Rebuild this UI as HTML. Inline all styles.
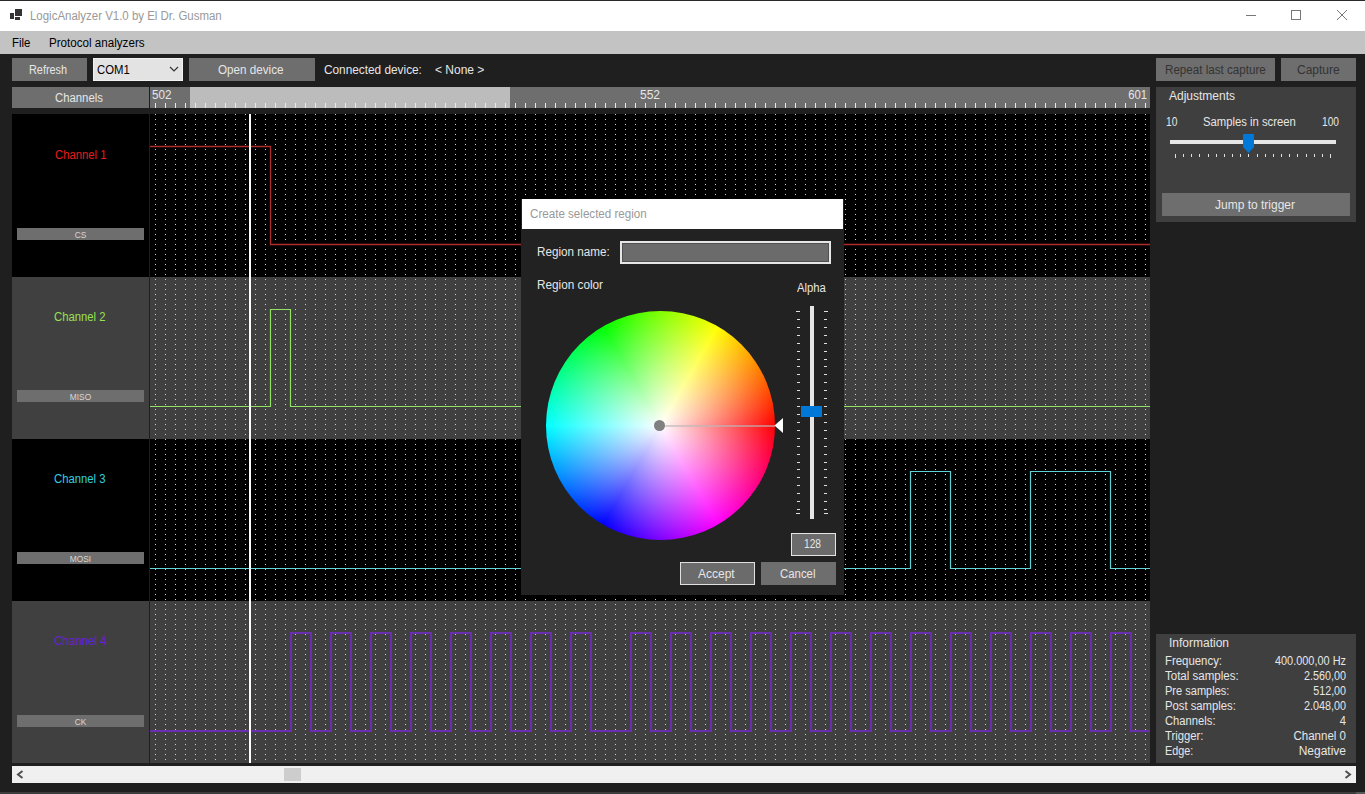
<!DOCTYPE html>
<html><head><meta charset="utf-8">
<style>
*{margin:0;padding:0;box-sizing:border-box}
html,body{width:1365px;height:794px;overflow:hidden;background:#1f1f1f;font-family:"Liberation Sans",sans-serif;font-size:12px;line-height:14px;color:#e6e6e6}
.a{position:absolute}
.t{position:absolute;white-space:nowrap;line-height:14px}
.btn{position:absolute;background:#6e6e6e}
</style></head><body>
<!-- window top border -->
<div class="a" style="left:0;top:0;width:1365px;height:1px;background:#2a2a2a"></div>
<!-- title bar -->
<div class="a" style="left:0;top:1px;width:1365px;height:30px;background:#ffffff"></div>
<div class="a" style="left:10px;top:13px;width:4px;height:6px;background:#333"></div>
<div class="a" style="left:15px;top:9px;width:7px;height:7px;background:#333"></div>
<div class="a" style="left:15px;top:17px;width:5px;height:3px;background:#333"></div>
<div class="t" style="transform:scaleX(0.955);transform-origin:0 0;left:30px;top:9px;color:#999">LogicAnalyzer V1.0 by El Dr. Gusman</div>
<div class="a" style="left:1246px;top:15px;width:10px;height:1px;background:#777"></div>
<div class="a" style="left:1291px;top:10px;width:10px;height:10px;border:1px solid #777"></div>
<svg class="a" style="left:1336px;top:9px" width="12" height="12"><path d="M1 1L11 11M11 1L1 11" stroke="#777" stroke-width="1"/></svg>
<!-- menu bar -->
<div class="a" style="left:0;top:31px;width:1365px;height:23px;background:#c3c3c3"></div>
<div class="t" style="transform:scaleX(0.95);transform-origin:0 0;left:12px;top:36px;color:#000">File</div>
<div class="t" style="transform:scaleX(0.968);transform-origin:0 0;left:49px;top:36px;color:#000">Protocol analyzers</div>

<!-- toolbar -->
<div class="btn" style="left:12px;top:58px;width:75px;height:23px"></div>
<div class="t" style="transform:scaleX(0.907);transform-origin:0 0;left:29px;top:63px;color:#e6e6e6">Refresh</div>
<div class="a" style="left:93px;top:58px;width:90px;height:23px;background:#e3e3e3;border:1px solid #f2f2f2"></div>
<div class="t" style="transform:scaleX(0.943);transform-origin:0 0;left:97px;top:63px;color:#000">COM1</div>
<svg class="a" style="left:169px;top:66px" width="10" height="7"><path d="M1 1L5 5L9 1" stroke="#333" fill="none" stroke-width="1.2"/></svg>
<div class="btn" style="left:189px;top:58px;width:126px;height:23px"></div>
<div class="t" style="transform:scaleX(0.972);transform-origin:0 0;left:218px;top:63px">Open device</div>
<div class="t" style="transform:scaleX(0.985);transform-origin:0 0;left:324px;top:63px">Connected device:</div>
<div class="t" style="left:435px;top:63px">&lt; None &gt;</div>
<div class="btn" style="left:1156px;top:58px;width:119px;height:23px"></div>
<div class="t" style="transform:scaleX(0.968);transform-origin:0 0;left:1165px;top:63px;color:#333">Repeat last capture</div>
<div class="btn" style="left:1281px;top:58px;width:75px;height:23px"></div>
<div class="t" style="left:1297px;top:63px;color:#333">Capture</div>

<!-- channels header + ruler -->
<div class="a" style="left:12px;top:87px;width:137px;height:21px;background:#6e6e6e"></div>
<div class="t" style="transform:scaleX(0.945);transform-origin:0 0;left:55px;top:91px">Channels</div>
<div class="a" style="left:149px;top:87px;width:1px;height:676px;background:#1e1e1e"></div>
<div class="a" style="left:150px;top:87px;width:1000px;height:21px;background:#6e6e6e"></div>
<div class="a" style="left:190px;top:87px;width:320px;height:21px;background:#bcbcbc"></div>
<svg class="a" style="left:150px;top:103px" width="1000" height="5">
<defs><pattern id="tk" width="10" height="5" patternUnits="userSpaceOnUse"><rect x="5" y="0" width="1" height="5" fill="#e8e8e8"/></pattern></defs>
<rect width="1000" height="5" fill="url(#tk)"/></svg>
<div class="t" style="transform:scaleX(0.97);transform-origin:0 0;left:152px;top:88px">502</div>
<div class="t" style="left:640px;top:88px">552</div>
<div class="t" style="left:1047px;width:100px;text-align:right;top:88px;transform:scaleX(0.94);transform-origin:100% 0">601</div>

<!-- channel rows -->
<div class="a" style="left:12px;top:114px;width:137px;height:163px;background:#000"></div>
<div class="a" style="left:12px;top:277px;width:137px;height:162px;background:#404040"></div>
<div class="a" style="left:12px;top:439px;width:137px;height:162px;background:#000"></div>
<div class="a" style="left:12px;top:601px;width:137px;height:162px;background:#404040"></div>
<div class="a" style="left:150px;top:114px;width:1000px;height:163px;background:#000"></div>
<div class="a" style="left:150px;top:277px;width:1000px;height:162px;background:#404040"></div>
<div class="a" style="left:150px;top:439px;width:1000px;height:162px;background:#000"></div>
<div class="a" style="left:150px;top:601px;width:1000px;height:162px;background:#404040"></div>
<svg class="a" style="left:150px;top:114px" width="1000" height="649">
<defs><pattern id="dt" width="10" height="5" patternUnits="userSpaceOnUse"><rect x="5" y="0" width="1" height="1" fill="#cfcfcf"/></pattern></defs>
<rect width="1000" height="649" fill="url(#dt)"/>
</svg>
<div class="t" style="transform:scaleX(0.94);transform-origin:0 0;left:55px;top:148px;color:#e81c1c">Channel 1</div>
<div class="t" style="transform:scaleX(0.94);transform-origin:0 0;left:54px;top:310px;color:#98e050">Channel 2</div>
<div class="t" style="transform:scaleX(0.94);transform-origin:0 0;left:54px;top:472px;color:#2fd0e0">Channel 3</div>
<div class="t" style="transform:scaleX(0.96);transform-origin:0 0;left:54px;top:634px;color:#6a1fd8">Channel 4</div>
<div class="a" style="left:17px;top:228px;width:127px;height:12px;background:#6e6e6e"></div>
<div class="a" style="left:17px;top:390px;width:127px;height:12px;background:#6e6e6e"></div>
<div class="a" style="left:17px;top:552px;width:127px;height:12px;background:#6e6e6e"></div>
<div class="a" style="left:17px;top:715px;width:127px;height:12px;background:#6e6e6e"></div>

<div class="t" style="left:17px;top:229px;width:127px;height:12px;line-height:12px;font-size:9.5px;text-align:center;color:#d8d8d8;transform:scaleX(0.88)">CS</div>
<div class="t" style="left:17px;top:391px;width:127px;height:12px;line-height:12px;font-size:9.5px;text-align:center;color:#d8d8d8;transform:scaleX(0.88)">MISO</div>
<div class="t" style="left:17px;top:553px;width:127px;height:12px;line-height:12px;font-size:9.5px;text-align:center;color:#d8d8d8;transform:scaleX(0.88)">MOSI</div>
<div class="t" style="left:17px;top:716px;width:127px;height:12px;line-height:12px;font-size:9.5px;text-align:center;color:#d8d8d8;transform:scaleX(0.88)">CK</div>
<!-- waveforms -->
<svg class="a" style="left:0;top:0" width="1365" height="794">
<path d="M150 146.5H270.5V244.5H1150" stroke="#b02c2c" stroke-width="1.3" fill="none"/>
<path d="M150 406.5H270.5V309.5H290.5V406.5H1150" stroke="#92e264" stroke-width="1.2" fill="none"/>
<path d="M150 568.5H910.5V471.5H950.5V568.5H1030.5V471.5H1110.5V568.5H1150" stroke="#5ed2d4" stroke-width="1.2" fill="none"/>
<path d="M150 731H291V633H311V731H331V633H351V731H371V633H391V731H411V633H431V731H451V633H471V731H491V633H511V731H531V633H551V731H571V633H591V731H631V633H651V731H671V633H691V731H711V633H731V731H751V633H771V731H791V633H811V731H831V633H851V731H871V633H891V731H911V633H931V731H951V633H971V731H991V633H1011V731H1031V633H1051V731H1071V633H1091V731H1111V633H1131V731H1150" stroke="#6a2fb0" stroke-width="2" fill="none"/>
<rect x="249" y="114" width="2" height="649" fill="#fff"/>
</svg>

<!-- right panels -->
<div class="a" style="left:1156px;top:87px;width:200px;height:135px;background:#3f3f3f"></div>
<div class="t" style="left:1169px;top:89px">Adjustments</div>
<div class="t" style="transform:scaleX(0.85);transform-origin:0 0;left:1166px;top:115px">10</div>
<div class="t" style="transform:scaleX(0.94);transform-origin:0 0;left:1203px;top:115px">Samples in screen</div>
<div class="t" style="transform:scaleX(0.85);transform-origin:0 0;left:1322px;top:115px">100</div>
<div class="a" style="left:1170px;top:140px;width:166px;height:4px;background:#e6e6e6"></div>
<svg class="a" style="left:1243px;top:134px" width="11" height="20"><path d="M0 0H11V13L5.5 19L0 13Z" fill="#0078d7"/></svg>
<svg class="a" style="left:0;top:0" width="1365" height="200"><path d="M1175.5 154V158M1183.5 154V157M1191.5 154V157M1199.5 154V157M1208.5 154V157M1216.5 154V157M1224.5 154V157M1232.5 154V157M1240.5 154V157M1248.5 154V157M1257.5 154V157M1265.5 154V157M1273.5 154V157M1281.5 154V157M1289.5 154V157M1297.5 154V157M1306.5 154V157M1314.5 154V157M1322.5 154V157M1330.5 154V158" stroke="#e0e0e0" stroke-width="1"/></svg>
<div class="btn" style="left:1162px;top:193px;width:188px;height:23px"></div>
<div class="t" style="left:1215px;top:198px">Jump to trigger</div>

<div class="a" style="left:1156px;top:634px;width:200px;height:129px;background:#3f3f3f"></div>
<div class="t" style="left:1169px;top:636px">Information</div>

<div class="t" style="transform:scaleX(0.95);transform-origin:0 0;left:1165px;top:654px">Frequency:</div>
<div class="t" style="transform:scaleX(0.91);transform-origin:100% 0;left:1146px;width:200px;text-align:right;top:654px">400.000,00 Hz</div>
<div class="t" style="transform:scaleX(0.96);transform-origin:0 0;left:1165px;top:669px">Total samples:</div>
<div class="t" style="transform:scaleX(0.9);transform-origin:100% 0;left:1146px;width:200px;text-align:right;top:669px">2.560,00</div>
<div class="t" style="transform:scaleX(0.92);transform-origin:0 0;left:1165px;top:684px">Pre samples:</div>
<div class="t" style="transform:scaleX(0.89);transform-origin:100% 0;left:1146px;width:200px;text-align:right;top:684px">512,00</div>
<div class="t" style="transform:scaleX(0.94);transform-origin:0 0;left:1165px;top:699px">Post samples:</div>
<div class="t" style="transform:scaleX(0.9);transform-origin:100% 0;left:1146px;width:200px;text-align:right;top:699px">2.048,00</div>
<div class="t" style="transform:scaleX(0.935);transform-origin:0 0;left:1165px;top:714px">Channels:</div>
<div class="t" style="transform:scaleX(0.93);transform-origin:100% 0;left:1146px;width:200px;text-align:right;top:714px">4</div>
<div class="t" style="transform:scaleX(0.94);transform-origin:0 0;left:1165px;top:729px">Trigger:</div>
<div class="t" style="transform:scaleX(0.96);transform-origin:100% 0;left:1146px;width:200px;text-align:right;top:729px">Channel 0</div>
<div class="t" style="transform:scaleX(0.9);transform-origin:0 0;left:1165px;top:744px">Edge:</div>
<div class="t" style="left:1146px;width:200px;text-align:right;top:744px">Negative</div>
<!-- scrollbar -->
<div class="a" style="left:12px;top:766px;width:1344px;height:17px;background:#f0f0f0"></div>
<div class="a" style="left:284px;top:768px;width:17px;height:13px;background:#cdcdcd"></div>
<svg class="a" style="left:0;top:760px" width="40" height="24"><path d="M22.5 11L18 14.5L22.5 18" stroke="#505050" stroke-width="2" fill="none"/></svg>
<svg class="a" style="left:1330px;top:760px" width="30" height="24"><path d="M15.5 11L20 14.5L15.5 18" stroke="#505050" stroke-width="2" fill="none"/></svg>
<div class="a" style="left:0;top:792px;width:1356px;height:2px;background:#3c3c3c"></div><div class="a" style="left:1356px;top:792px;width:9px;height:2px;background:#585858"></div>

<!-- dialog -->
<div class="a" style="left:521px;top:199px;width:323px;height:396px;background:#222"></div>
<div class="a" style="left:522px;top:199px;width:321px;height:30px;background:#fff"></div>
<div class="t" style="transform:scaleX(0.967);transform-origin:0 0;left:530px;top:207px;color:#999">Create selected region</div>
<div class="t" style="transform:scaleX(0.973);transform-origin:0 0;left:537px;top:245px">Region name:</div>
<div class="a" style="left:620px;top:241px;width:211px;height:23px;background:#6b6b6b;border:2px solid #e6e6e6;box-shadow:inset 0 0 0 1px #505050"></div>
<div class="t" style="transform:scaleX(0.98);transform-origin:0 0;left:537px;top:278px">Region color</div>
<div class="t" style="transform:scaleX(0.94);transform-origin:0 0;left:797px;top:281px">Alpha</div>
<div class="a" style="left:545.5px;top:311px;width:229px;height:229px;border-radius:50%;background:conic-gradient(from 90deg,#f00,#f0f 60deg,#00f 120deg,#0ff 180deg,#0f0 240deg,#ff0 300deg,#f00 360deg)"></div>
<div class="a" style="left:545.5px;top:311px;width:229px;height:229px;border-radius:50%;background:radial-gradient(closest-side,#fff,rgba(255,255,255,0))"></div>
<div class="a" style="left:660px;top:424.5px;width:115px;height:2px;background:rgba(185,185,185,0.6)"></div>
<div class="a" style="left:654px;top:420px;width:11px;height:11px;border-radius:50%;background:#808080"></div>
<svg class="a" style="left:774px;top:417px" width="10" height="17"><path d="M0.5 8.5L9 1V16Z" fill="#fff"/></svg>
<svg class="a" style="left:0;top:0" width="900" height="600"><path d="M796 311.5H800M824 311.5H828M797 319.5H800M824 319.5H827M797 327.5H800M824 327.5H827M797 335.5H800M824 335.5H827M797 343.5H800M824 343.5H827M797 351.5H800M824 351.5H827M797 359.5H800M824 359.5H827M797 366.5H800M824 366.5H827M797 374.5H800M824 374.5H827M797 382.5H800M824 382.5H827M797 390.5H800M824 390.5H827M797 398.5H800M824 398.5H827M797 406.5H800M824 406.5H827M797 414.5H800M824 414.5H827M797 422.5H800M824 422.5H827M797 430.5H800M824 430.5H827M797 438.5H800M824 438.5H827M797 446.5H800M824 446.5H827M797 454.5H800M824 454.5H827M797 462.5H800M824 462.5H827M797 469.5H800M824 469.5H827M797 477.5H800M824 477.5H827M797 485.5H800M824 485.5H827M797 493.5H800M824 493.5H827M797 501.5H800M824 501.5H827M797 509.5H800M824 509.5H827M796 513.5H800M824 513.5H828" stroke="#e0e0e0" stroke-width="1"/></svg>
<div class="a" style="left:810px;top:306px;width:4px;height:213px;background:#e6e6e6"></div>
<div class="a" style="left:801px;top:406px;width:21px;height:11px;background:#0078d7"></div>
<div class="a" style="left:791px;top:533px;width:45px;height:23px;background:#6b6b6b;border:1.5px solid #e4e4e4"></div>
<div class="t" style="transform:scaleX(0.85);transform-origin:0 0;left:804px;top:537px">128</div>
<div class="a" style="left:680px;top:562px;width:75px;height:23px;background:#6b6b6b;border:1.2px solid #e0e0e0"></div>
<div class="t" style="left:698px;top:567px">Accept</div>
<div class="btn" style="left:761px;top:562px;width:75px;height:23px"></div>
<div class="t" style="transform:scaleX(0.95);transform-origin:0 0;left:780px;top:567px">Cancel</div>
</body></html>
